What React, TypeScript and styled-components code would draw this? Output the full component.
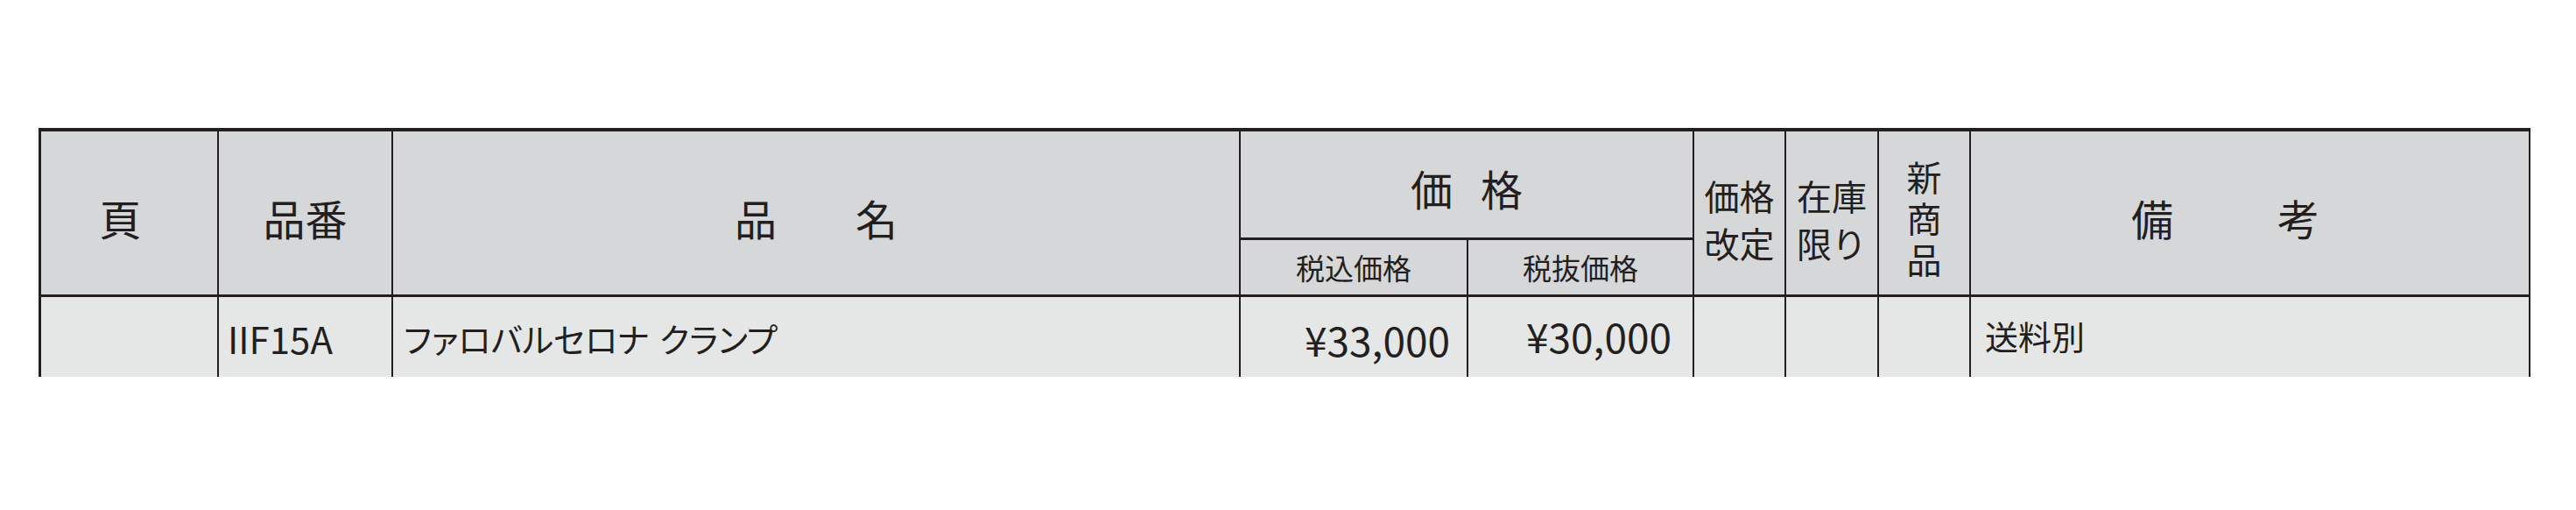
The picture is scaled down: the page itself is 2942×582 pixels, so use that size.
import styled, { createGlobalStyle } from 'styled-components';

const GlobalStyle = createGlobalStyle`
  html, body {
    margin: 0;
    padding: 0;
    background: #ffffff;
  }
  body {
    width: 2942px;
    height: 582px;
    overflow: hidden;
    font-family: "Noto Sans CJK JP", "Noto Sans", sans-serif;
    color: #231f20;
  }
`;

const Page = styled.div`
  padding: 146px 0 0 44px;
`;

const Table = styled.div`
  display: grid;
  grid-template-columns: 201px 197px 966px 258px 256px 103px 104px 103px 637px;
  grid-template-rows: 121px 62px 91px;
  column-gap: 2px;
  row-gap: 3px;
  width: max-content;
  padding: 4px 2px 0 3px;
  background: #231f20;
`;

const HeadCell = styled.div<{ $area: string; $size?: number; $padTop?: number; $padRight?: number }>`
  grid-area: ${({ $area }) => $area};
  display: flex;
  align-items: center;
  justify-content: center;
  background: #d6d7d9;
  font-size: ${({ $size = 48 }) => $size}px;
  line-height: 1;
  padding-top: ${({ $padTop = 9 }) => $padTop}px;
  padding-right: ${({ $padRight = 0 }) => $padRight}px;
  box-sizing: border-box;
  white-space: nowrap;
`;

const SpacedLabel = styled.span<{ $gap: number }>`
  display: flex;
  gap: ${({ $gap }) => $gap}px;
`;

const StackLabel = styled.span<{ $lineHeight: number }>`
  display: block;
  text-align: center;
  line-height: ${({ $lineHeight }) => $lineHeight}px;
`;

const VerticalLabel = styled.span<{ $tracking: number }>`
  display: block;
  writing-mode: vertical-rl;
  text-orientation: upright;
  letter-spacing: ${({ $tracking }) => $tracking}px;
  line-height: 1;
`;

const BodyCell = styled.div<{ $align?: 'left' | 'right'; $pad?: number; $size?: number; $shift?: number }>`
  display: flex;
  align-items: center;
  justify-content: ${({ $align = 'left' }) => ($align === 'right' ? 'flex-end' : 'flex-start')};
  background: #e5e6e6;
  font-size: ${({ $size = 42 }) => $size}px;
  line-height: 1;
  box-sizing: border-box;
  ${({ $shift = 0 }) => ($shift >= 0 ? `padding-top: ${$shift}px;` : `padding-bottom: ${-$shift}px;`)}
  ${({ $align = 'left', $pad = 10 }) => ($align === 'right' ? `padding-right: ${$pad}px;` : `padding-left: ${$pad}px;`)}
  white-space: pre;
`;

const KanaText = styled.span`
  font-feature-settings: 'palt';
  word-spacing: 3px;
`;

const Spaced = ({ text, gap }: { text: string; gap: number }) => (
  <SpacedLabel $gap={gap}>
    {text.split('').map((ch, i) => (
      <span key={i}>{ch}</span>
    ))}
  </SpacedLabel>
);

export default function App() {
  return (
    <>
      <GlobalStyle />
      <Page>
        <Table>
          <HeadCell $area="1 / 1 / 3 / 2" $padRight={20}>
            頁
          </HeadCell>
          <HeadCell $area="1 / 2 / 3 / 3">品番</HeadCell>
          <HeadCell $area="1 / 3 / 3 / 4">
            <Spaced text="品名" gap={90} />
          </HeadCell>
          <HeadCell $area="1 / 4 / 2 / 6" $padTop={6}>
            <Spaced text="価格" gap={32} />
          </HeadCell>
          <HeadCell $area="2 / 4 / 3 / 5" $size={33} $padTop={0}>
            税込価格
          </HeadCell>
          <HeadCell $area="2 / 5 / 3 / 6" $size={33} $padTop={0}>
            税抜価格
          </HeadCell>
          <HeadCell $area="1 / 6 / 3 / 7" $size={40} $padTop={14}>
            <StackLabel $lineHeight={54}>
              価格
              <br />
              改定
            </StackLabel>
          </HeadCell>
          <HeadCell $area="1 / 7 / 3 / 8" $size={40} $padTop={14}>
            <StackLabel $lineHeight={54}>
              在庫
              <br />
              限り
            </StackLabel>
          </HeadCell>
          <HeadCell $area="1 / 8 / 3 / 9" $size={40} $padTop={20}>
            <VerticalLabel $tracking={7}>新商品</VerticalLabel>
          </HeadCell>
          <HeadCell $area="1 / 9 / 3 / 10" $padRight={56}>
            <Spaced text="備考" gap={119} />
          </HeadCell>

          <BodyCell />
          <BodyCell $pad={10} $shift={3}>
            IIF15A
          </BodyCell>
          <BodyCell $pad={12} $size={38} $shift={3}>
            <KanaText>ファロバルセロナ クランプ</KanaText>
          </BodyCell>
          <BodyCell $align="right" $pad={19} $size={46} $shift={5}>
            ¥33,000
          </BodyCell>
          <BodyCell $align="right" $pad={24} $size={46} $shift={-4}>
            ¥30,000
          </BodyCell>
          <BodyCell />
          <BodyCell />
          <BodyCell />
          <BodyCell $pad={16} $size={38} $shift={-4}>
            送料別
          </BodyCell>
        </Table>
      </Page>
    </>
  );
}
